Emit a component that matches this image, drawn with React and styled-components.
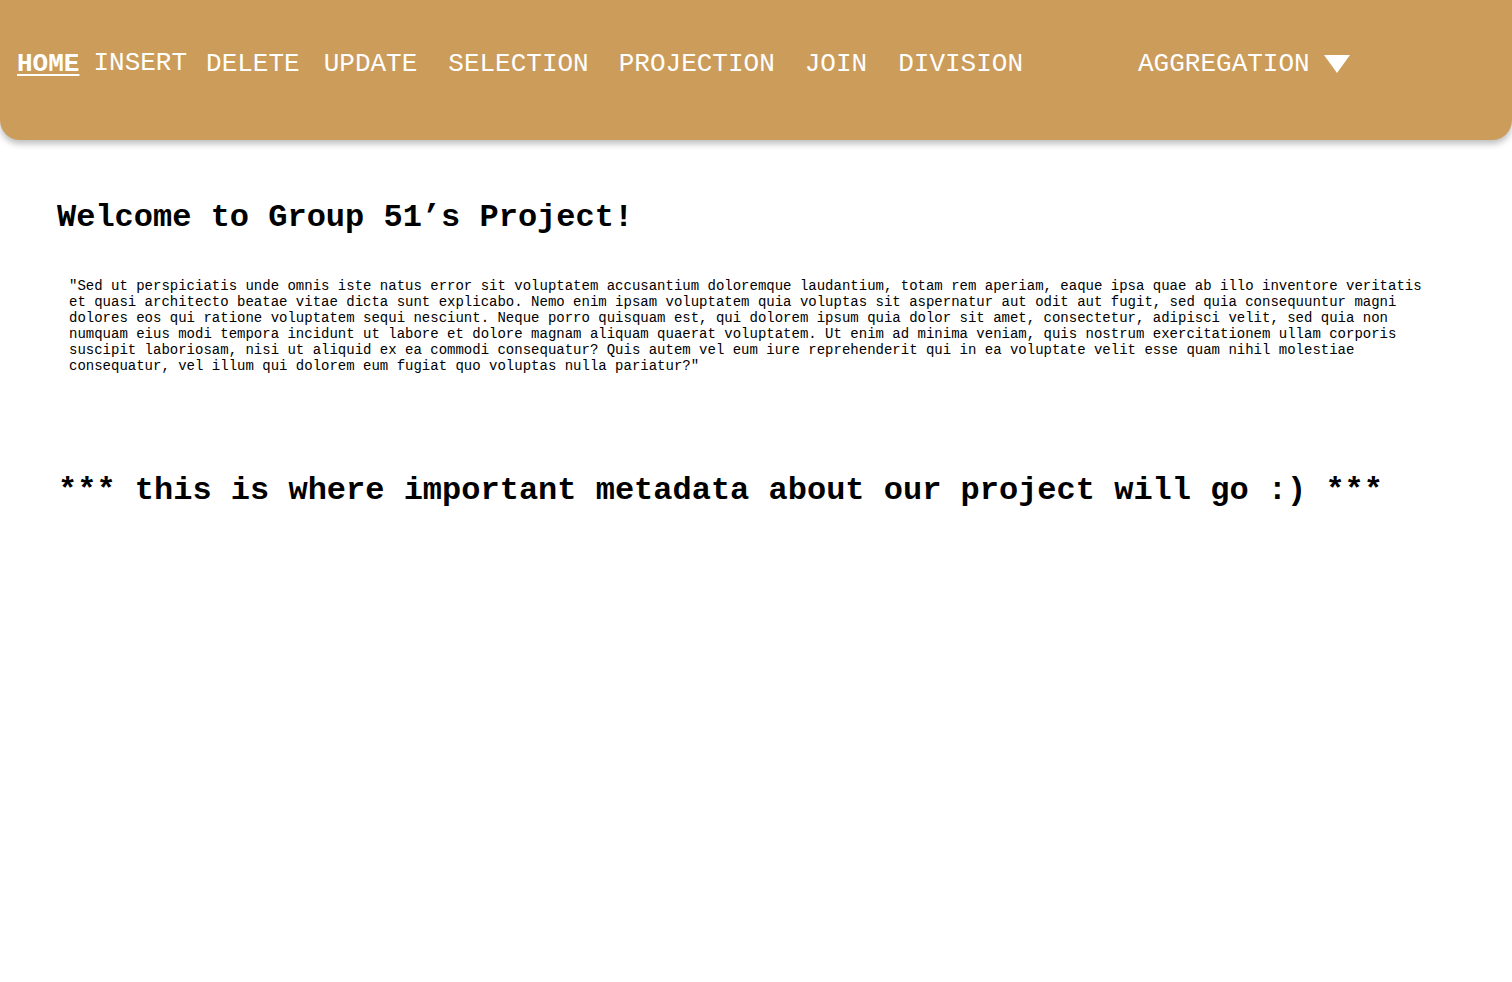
import styled, { createGlobalStyle } from "styled-components";

const GlobalStyle = createGlobalStyle`
  body {
    margin: 0;
    background: #ffffff;
    font-family: "Liberation Mono", "Courier New", monospace;
  }
`;

const links = [
  { label: "HOME", active: true, gap: 0 },
  { label: "INSERT", gap: 14, lift: 1 },
  { label: "DELETE", gap: 19 },
  { label: "UPDATE", gap: 24 },
  { label: "SELECTION", gap: 31 },
  { label: "PROJECTION", gap: 30 },
  { label: "JOIN", gap: 30 },
  { label: "DIVISION", gap: 31 },
];

const App = () => {
  return (
    <>
      <GlobalStyle />
      <Header>
        <Nav>
          {links.map((l) => (
            <NavLink key={l.label} $active={l.active} $gap={l.gap} $lift={l.lift}>
              {l.label}
            </NavLink>
          ))}
          <Dropdown>
            AGGREGATION
            <svg width="26" height="18" viewBox="0 0 26 18">
              <polygon points="0,0 26,0 13,18" fill="#ffffff" />
            </svg>
          </Dropdown>
        </Nav>
      </Header>
      <Main>
        <Title>Welcome to Group 51’s Project!</Title>
        <Blurb>
          "Sed ut perspiciatis unde omnis iste natus error sit voluptatem accusantium
          doloremque laudantium, totam rem aperiam, eaque ipsa quae ab illo inventore
          veritatis et quasi architecto beatae vitae dicta sunt explicabo. Nemo enim ipsam
          voluptatem quia voluptas sit aspernatur aut odit aut fugit, sed quia consequuntur
          magni dolores eos qui ratione voluptatem sequi nesciunt. Neque porro quisquam est,
          qui dolorem ipsum quia dolor sit amet, consectetur, adipisci velit, sed quia non
          numquam eius modi tempora incidunt ut labore et dolore magnam aliquam quaerat
          voluptatem. Ut enim ad minima veniam, quis nostrum exercitationem ullam corporis
          suscipit laboriosam, nisi ut aliquid ex ea commodi consequatur? Quis autem vel eum
          iure reprehenderit qui in ea voluptate velit esse quam nihil molestiae consequatur,
          vel illum qui dolorem eum fugiat quo voluptas nulla pariatur?"
        </Blurb>
        <Title $spaced>*** this is where important metadata about our project will go :) ***</Title>
      </Main>
    </>
  );
};

export default App;

const Header = styled.header`
  box-sizing: border-box;
  height: 140px;
  padding: 49px 0 0 17px;
  background: #cb9c5a;
  border-radius: 0 0 20px 20px;
  box-shadow: 0 4px 6px rgba(0, 0, 0, 0.25);
`;

const Nav = styled.nav`
  display: flex;
  align-items: center;
`;

const NavLink = styled.a`
  margin-left: ${(p) => p.$gap}px;
  font-size: 26px;
  line-height: 30px;
  color: #ffffff;
  font-weight: ${(p) => (p.$active ? 700 : 400)};
  text-decoration: ${(p) => (p.$active ? "underline" : "none")};
  text-underline-offset: 3px;
  position: relative;
  top: ${(p) => (p.$lift ? -p.$lift : 0)}px;
  cursor: pointer;
`;

const Dropdown = styled.div`
  display: flex;
  align-items: center;
  gap: 14px;
  margin-left: 115px;
  font-size: 26px;
  line-height: 30px;
  color: #ffffff;
  cursor: pointer;
`;

const Main = styled.main`
  padding: 60px 69px 0 57px;
`;

const Title = styled.h1`
  margin: ${(p) => (p.$spaced ? "99px 0 0 1px" : "0")};
  font-size: 32px;
  line-height: 36px;
  font-weight: 700;
  color: #000000;
`;

const Blurb = styled.p`
  margin: 42px 0 0 12px;
  font-size: 14px;
  line-height: 16px;
  color: #000000;
`;
